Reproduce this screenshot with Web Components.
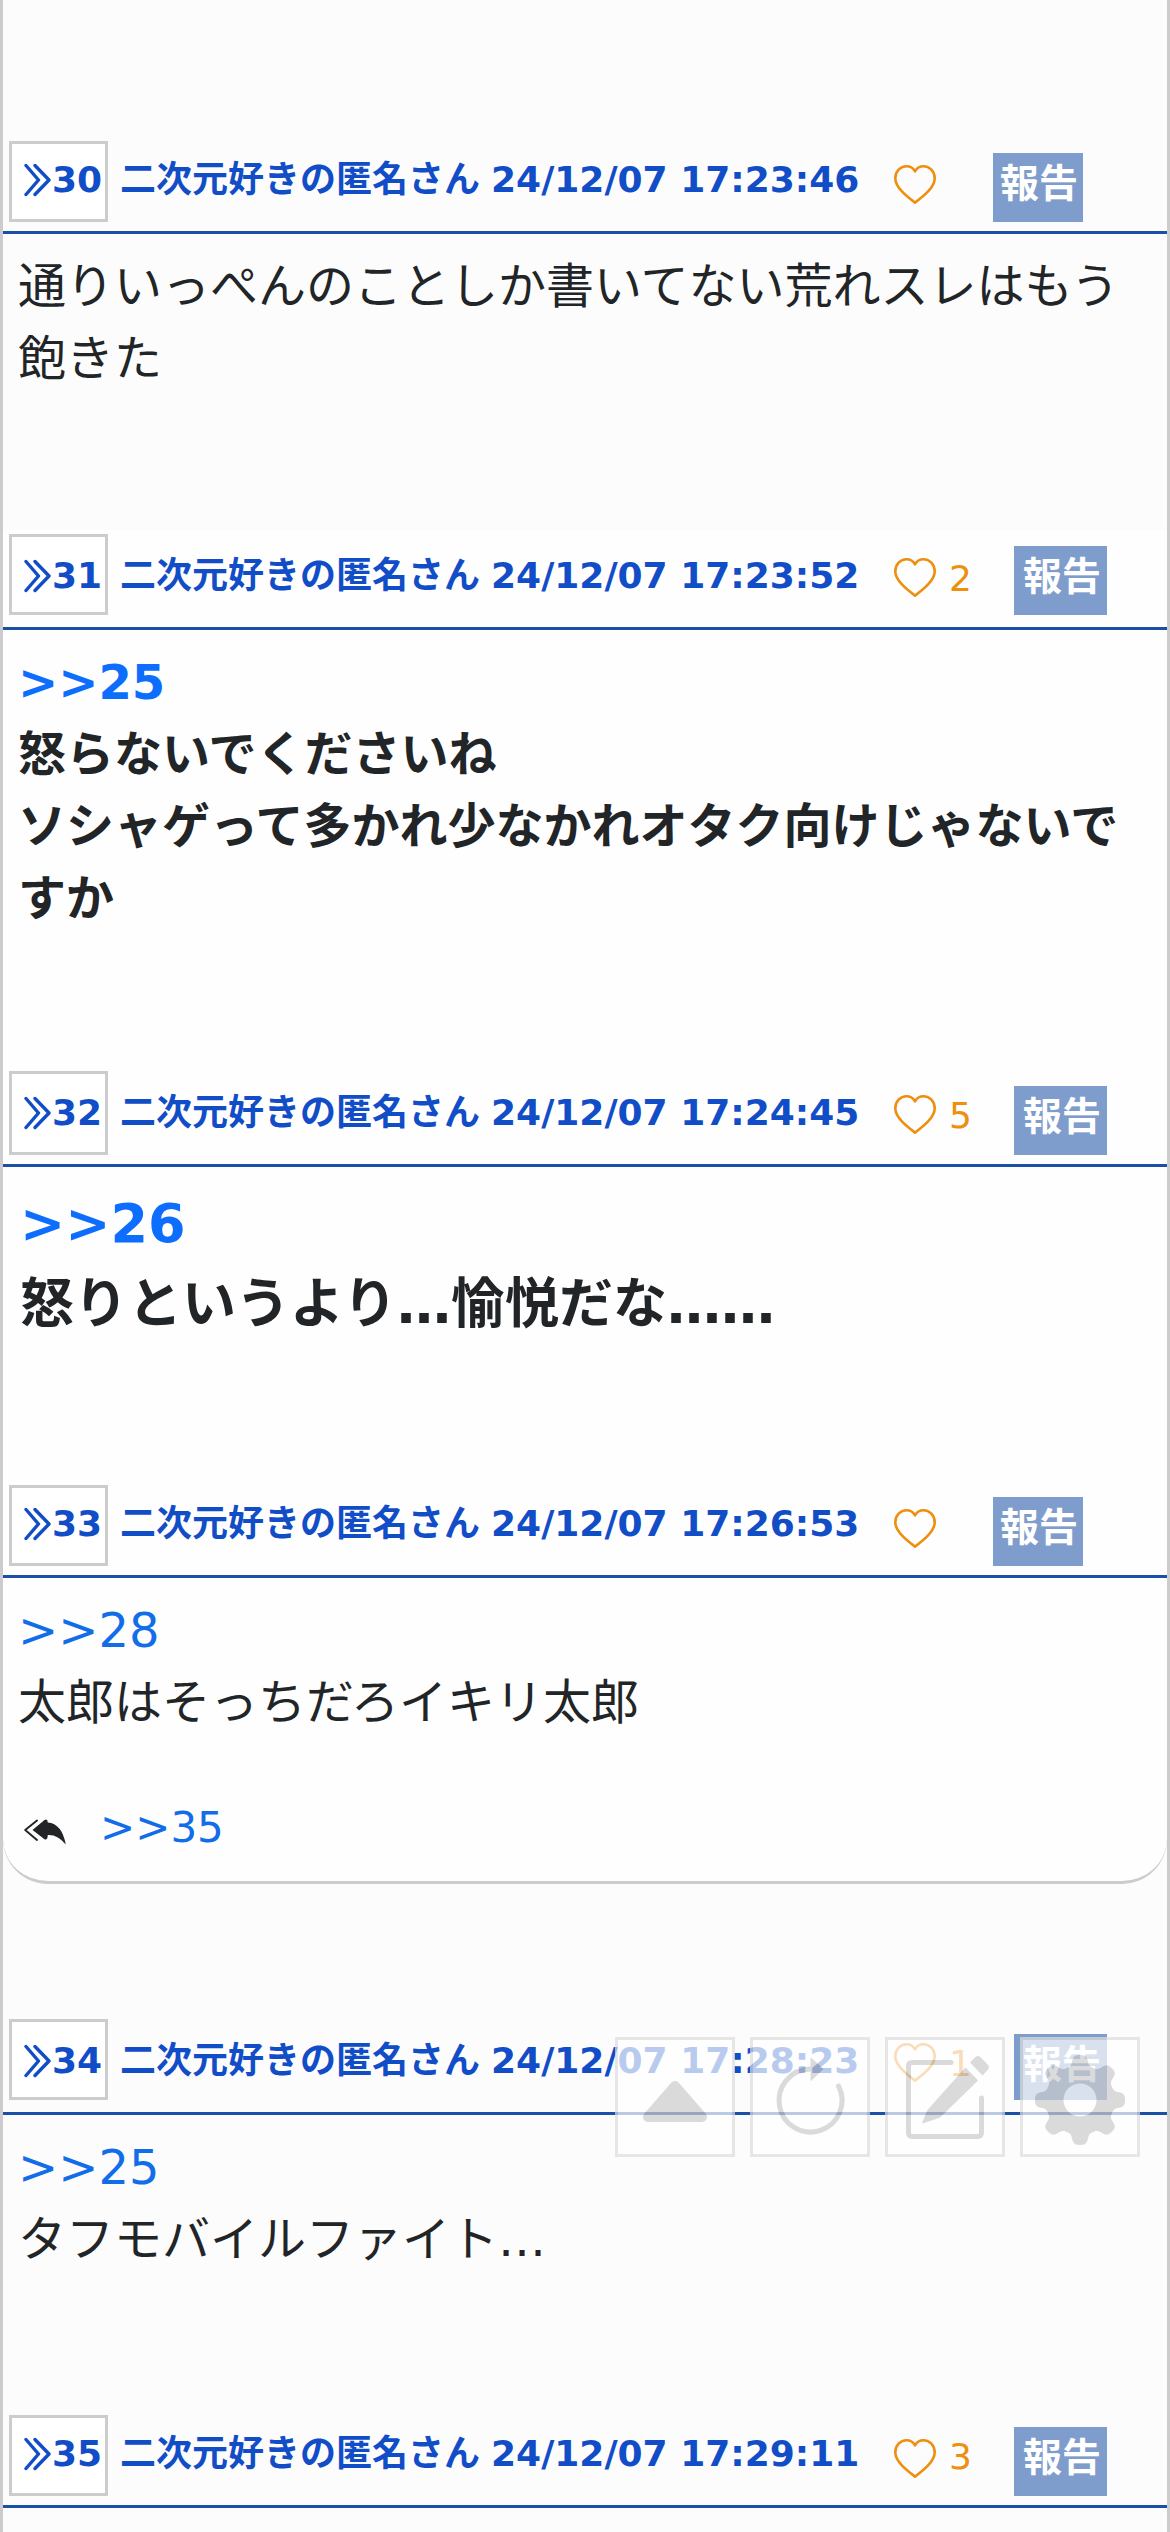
<!DOCTYPE html>
<html lang="ja">
<head>
<meta charset="utf-8">
<title>スレッド</title>
<style>
html,body{margin:0;padding:0}
body{width:1170px;height:2532px;overflow:hidden;font-family:"DejaVu Sans","Noto Sans CJK JP",sans-serif;color:#222527;background:#fcfcfc}
</style>
</head>
<body>
<bbs-thread>
  <bbs-post no="30" time="24/12/07 17:23:46" style="--body:296px;--bg:#fcfcfc">通りいっぺんのことしか書いてない荒れスレはもう飽きた</bbs-post>
  <bbs-post no="31" time="24/12/07 17:23:52" likes="2" gap="12" style="--body:437px;--bg:#fefefe;--weight:700;--link:#0d6efd"><bbs-ref>&gt;&gt;25</bbs-ref><br>怒らないでくださいね<br>ソシャゲって多かれ少なかれオタク向けじゃないですか</bbs-post>
  <bbs-post no="32" time="24/12/07 17:24:45" likes="5" style="--body:311px;--bg:#fefefe;--weight:700;--link:#0d6efd;--size:54px;--indent:17px;--box:84px;--heart:30px"><bbs-ref>&gt;&gt;26</bbs-ref><br>怒りというより…愉悦だな……</bbs-post>
  <bbs-post no="33" time="24/12/07 17:26:53" reply="&gt;&gt;35" style="--body:306px;--bg:#fefefe;--after:131px"><bbs-ref>&gt;&gt;28</bbs-ref><br>太郎はそっちだろイキリ太郎</bbs-post>
  <bbs-post no="34" time="24/12/07 17:28:23" likes="1" gap="12" style="--body:293px;--bg:#fcfcfc;--badge:66px"><bbs-ref>&gt;&gt;25</bbs-ref><br>タフモバイルファイト…</bbs-post>
  <bbs-post no="35" time="24/12/07 17:29:11" likes="3" style="--body:24px;--bg:#fcfcfc"></bbs-post>
</bbs-thread>
<bbs-toolbar></bbs-toolbar>
<script>
const make = (name, html) => customElements.define(name, class extends HTMLElement {
  connectedCallback() {
    if (this.shadowRoot) return;
    this.attachShadow({mode: 'open'}).innerHTML = typeof html === 'function' ? html(this) : html;
  }
});

make('bbs-thread', `<style>
:host{display:flex;flex-direction:column;box-sizing:border-box;width:1170px;height:2532px;padding-top:134px;border:solid #ccc;border-width:0 3px;overflow:hidden}
</style><slot></slot>`);

make('bbs-ref', `<style>:host{color:var(--link,#126de8)}</style><slot></slot>`);

make('bbs-number', `<style>
:host{display:flex;align-items:flex-end;box-sizing:border-box;width:99px;height:var(--box,81px);border:3px solid #ccc;background:#fff;padding:0 0 var(--drop) 12px;color:#124dc8;font:700 36px/36px "DejaVu Sans",sans-serif}
svg{display:block;flex:none;width:28px;height:34px;margin:0 0 1px}
</style><svg viewBox="0 0 28 34" fill="none" stroke="#124dc8" stroke-width="3.4" stroke-linecap="round" stroke-linejoin="round"><path d="M2 2.5 14.5 17 2 31.5M11 2.5 25 17 11 31.5"/></svg><span><slot></slot></span>`);

make('bbs-like', el => `<style>
:host{display:flex;align-items:flex-end;flex:none;width:${el.getAttribute('count') ? 120 : 99}px;color:#ee8f10;font:400 36px/36px "DejaVu Sans",sans-serif}
svg{display:block;width:42px;height:39px;margin-bottom:var(--heart,var(--rise))}
span{margin:0 0 30.5px 13px}
</style><svg viewBox="0 0 42 39" fill="none" stroke="#ee8f10" stroke-width="2.6" stroke-linejoin="round"><path d="M21 37.6C13 31.5 1.3 22.5 1.3 13.4 1.3 6.4 6.5 1.3 12.4 1.3 16.4 1.3 19.4 3.3 21 6.3 22.6 3.3 25.6 1.3 29.6 1.3 35.5 1.3 40.7 6.4 40.7 13.4 40.7 22.5 29 31.5 21 37.6Z"/></svg>${el.getAttribute('count') ? `<span>${el.getAttribute('count')}</span>` : ''}`);

make('bbs-report', el => `<style>
:host{display:block;box-sizing:border-box;flex:none;width:${el.hasAttribute('wide') ? 93 : 90}px;height:var(--badge,69px);padding-left:${el.hasAttribute('wide') ? 9 : 7}px;background:#7f9dcc;color:#fff;font:700 39px/62px "DejaVu Sans","Noto Sans CJK JP",sans-serif;white-space:nowrap}
</style><slot></slot>`);

make('bbs-reply', `<style>
:host{display:flex;align-items:center;padding:66px 0 0 6px;color:#126de8;font:400 42px/48px "DejaVu Sans",sans-serif}
svg{display:block;width:42px;height:26px;margin:8px 34px 0 0}
</style><svg viewBox="0 0 42 26"><path d="M13 1.5 1.2 11 13 21" fill="none" stroke="#222527" stroke-width="1.9" stroke-linecap="round" stroke-linejoin="round"/><path fill="#222527" d="M8.5 11 20.5 1Q23.6-1 23.8 3.4 38 4.5 41.8 25.6 34 15.5 23.8 16 23.6 21.5 20.5 20.3Z"/></svg><span><slot></slot></span>`);

make('bbs-post', el => {
  const gap = +(el.getAttribute('gap') || 9), likes = el.getAttribute('likes'), reply = el.getAttribute('reply');
  return `<style>
:host{display:block;flex:none;--drop:${30.5 - gap}px;--rise:${18 + gap}px}
header{display:flex;align-items:flex-end;box-sizing:border-box;height:100px;border-bottom:3px solid #1b50a8;padding-left:6px;background:var(--bg)}
bbs-number,bbs-report{margin-bottom:${gap}px}
.meta{flex:none;width:774px;margin:0 0 33.5px 12px;color:#124dc8;font-size:36px;line-height:36px;font-weight:700;white-space:nowrap}
.name{margin-right:-1.5px}
.text{box-sizing:border-box;height:var(--body);padding:16px 15px 0 var(--indent,15px);background:var(--bg);font-size:var(--size,48px);line-height:1.5;font-weight:var(--weight,400);margin-bottom:var(--after,0)}
${reply ? '.text{border-bottom:3px solid #ccc;border-radius:0 0 45px 45px}' : ''}
</style>
<header><bbs-number>${el.getAttribute('no')}</bbs-number><div class="meta"><span class="name">二次元好きの匿名さん</span> ${el.getAttribute('time')}</div><bbs-like ${likes ? `count="${likes}"` : ''}></bbs-like><bbs-report ${likes ? 'wide' : ''}>報告</bbs-report></header>
<div class="text"><slot></slot>${reply ? `<bbs-reply>${reply}</bbs-reply>` : ''}</div>`;
});

// Gear outline: eight rounded lobes around the hub
const gear = 'M' + Array.from({length: 240}, (_, i) => {
  const a = i * Math.PI / 120, r = 39.8 + 5.2 * Math.tanh(1.9 * Math.cos(8 * a)) / Math.tanh(1.9);
  return (57 + r * Math.cos(a)).toFixed(2) + ' ' + (60 + r * Math.sin(a)).toFixed(2);
}).join('L') + 'Z';
make('bbs-toolbar', `<style>
:host{position:absolute;left:615px;top:2037px;display:flex;gap:15px;opacity:.7}
div{box-sizing:border-box;width:120px;height:120px;border:3px solid #ddd;background:#fff}
svg{display:block;width:114px;height:114px;fill:none}
</style>
<div><svg viewBox="0 0 114 114"><path fill="#ccc" stroke="#ccc" stroke-width="10" stroke-linejoin="round" d="M57 46 30 77H84Z"/></svg></div>
<div><svg viewBox="0 0 114 114"><path stroke="#ccc" stroke-width="5" stroke-linecap="round" d="M57.5 29A31.5 31.5 0 1 0 85.5 46"/><path fill="#ccc" stroke="#ccc" stroke-linejoin="round" d="M58 18 70 29 58 40.5Z"/></svg></div>
<div><svg viewBox="0 0 114 114"><path stroke="#ccc" stroke-width="5" stroke-linecap="round" stroke-linejoin="round" d="M63 22.5H24Q20.5 22.5 20.5 26V92.5Q20.5 96.5 24 96.5H89.5Q93.5 96.5 93.5 92.5V58"/><path fill="#ccc" stroke="#ccc" stroke-width="1.5" stroke-linejoin="round" d="M35 82.5 40 70.5 77.5 28.5 89 40.5 51.5 77ZM83 22.5 88 17.5Q90 16 92 17.8L99 25Q101 27 99.5 29L94.5 34.5Z"/></svg></div>
<div><svg viewBox="0 0 114 114"><path fill="#ccc" fill-rule="evenodd" d="${gear}M73.5 60A16.5 16.5 0 1 0 40.5 60 16.5 16.5 0 1 0 73.5 60Z"/></svg></div>`);
</script>
</body>
</html>
